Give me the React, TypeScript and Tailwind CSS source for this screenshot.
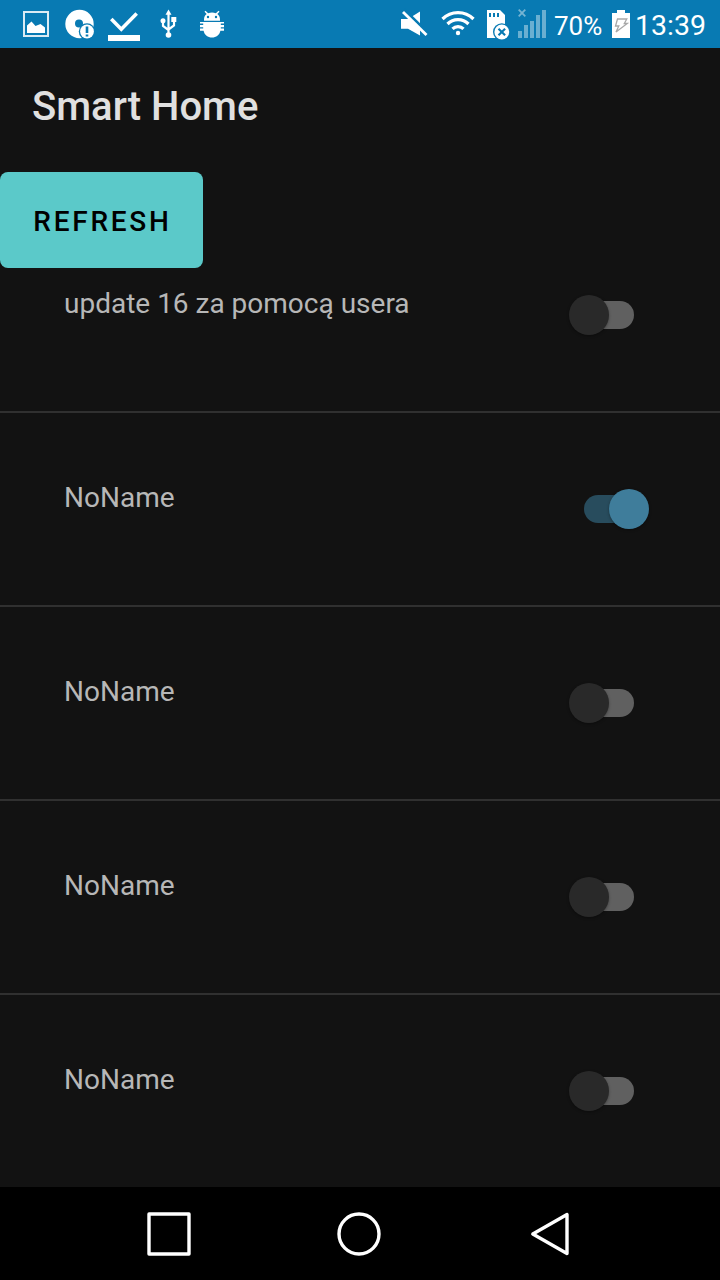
import type { ReactNode } from "react";

type Device = { name: string; on: boolean };

const devices: Device[] = [
  { name: "update 16 za pomocą usera", on: false },
  { name: "NoName", on: true },
  { name: "NoName", on: false },
  { name: "NoName", on: false },
  { name: "NoName", on: false },
];

function Glyph({ w, h = 48, className = "", children }: { w: number; h?: number; className?: string; children: ReactNode }) {
  return (
    <svg width={w} height={h} viewBox={`0 0 ${w} ${h}`} className={`shrink-0 ${className}`} fill="white" aria-hidden="true">
      {children}
    </svg>
  );
}

function StatusBar() {
  return (
    <header className="flex h-12 shrink-0 items-center bg-[#087ab3] text-white">
      <Glyph w={26} className="ml-[23px]">
        <rect x="1" y="12" width="24" height="24" fill="none" stroke="white" strokeWidth="2" strokeOpacity=".85" />
        <path d="M4 33V25.500L8.500 21.500l4 4.500 5-2 4.500 3.500V33z" />
      </Glyph>
      <Glyph w={30} className="ml-[16px]">
        <circle cx="14.500" cy="24" r="14.200" />
        <circle cx="14" cy="23.500" r="4" fill="#087ab3" />
        <circle cx="22" cy="31.500" r="8.200" fill="#087ab3" />
        <circle cx="22" cy="31.500" r="6.900" />
        <path d="M20.700 26.500h2.600V33h-2.600zM20.700 34.400h2.600v2.200h-2.600z" fill="#087ab3" />
      </Glyph>
      <Glyph w={32} className="ml-[13px]">
        <path d="M3.300 19l10 10.200L28.700 13.500" fill="none" stroke="white" strokeWidth="3.600" />
        <rect y="35" width="32" height="6" />
      </Glyph>
      <Glyph w={18} className="ml-[20px]">
        <path d="M8.500 9.500l3 5.200h-6z" />
        <path d="M8.500 13v22M3 21v5l5.500 4M14 20v5.500l-5.500 4" fill="none" stroke="white" strokeWidth="2.200" />
        <circle cx="3" cy="20.800" r="2.500" />
        <rect x="11.300" y="17" width="5" height="5" />
        <circle cx="8.500" cy="35" r="2.800" />
      </Glyph>
      <Glyph w={24} className="ml-[22px]">
        <path d="M4 20.700v-1c0-2.800 1-4.700 2.700-5.700L4.500 11.800l1-1 2.600 2.400a12 12 0 0 1 7.800 0l2.600-2.400 1 1L17.300 14c1.700 1 2.700 2.900 2.700 5.700v1z" />
        <path d="M0 22h24v1.600h-3.200V25H24v2.200h-3.200v1.300H24v2.200h-3.600C19.500 35 16.200 37.500 12 37.500S4.500 35 3.600 30.700H0v-2.200h3.200v-1.300H0V25h3.200v-1.400H0z" />
        <circle cx="8" cy="17" r="1.200" fill="#087ab3" />
        <circle cx="16" cy="17" r="1.200" fill="#087ab3" />
      </Glyph>
      <Glyph w={28} className="ml-[176px]">
        <path d="M1 19h7L20 11.500v24L8 28.800H1z" />
        <path d="M4 9.500L29 34" stroke="#087ab3" strokeWidth="3" />
        <path d="M3 12l23.500 23" stroke="white" strokeWidth="2.800" />
      </Glyph>
      <Glyph w={34} className="ml-[13px]">
        <g fill="none" stroke="white" strokeWidth="3.200">
          <path d="M1.500 19a21.800 21.800 0 0 1 31 0" />
          <path d="M6.500 24a14.800 14.800 0 0 1 21 0" />
          <path d="M11.500 28.800a7.800 7.800 0 0 1 11 0" />
        </g>
        <circle cx="17" cy="33" r="2.200" />
      </Glyph>
      <Glyph w={24} className="ml-[11px]">
        <path d="M1 10h13l5 5v23H1z" />
        <path d="M3 13h2v4H3zM7 13h2v4H7zM11 13h2v4h-2z" fill="#087ab3" />
        <circle cx="15.800" cy="32" r="8.800" fill="#087ab3" />
        <circle cx="15.800" cy="32" r="7.400" />
        <path d="M12.500 28.700l6.600 6.600m0-6.600l-6.600 6.600" stroke="#087ab3" strokeWidth="2.100" />
      </Glyph>
      <Glyph w={30} className="ml-[7px]">
        <g opacity=".4">
          <path d="M1 31h4v7H1zM7 25h4v13H7zM13 21h4v17h-4zM19 15h4v23h-4zM25 10h4v28h-4z" />
        </g>
        <path d="M1.700 9.700l6.600 6.600m0-6.600l-6.600 6.600" stroke="#75b4d3" strokeWidth="1.800" />
      </Glyph>
      <span className="ml-[7px] w-[50px] whitespace-nowrap pt-[3px] text-[26px] leading-[48px]">70%</span>
      <Glyph w={18} className="ml-[8px]">
        <path d="M5 10h8v3h5v25H0V13h5z" />
        <path d="M5.500 19h9.300L12.300 23.500h3L4 32l2.800-6H3.500z" fill="none" stroke="#a8a8a8" strokeWidth="1.300" />
      </Glyph>
      <time className="ml-[5px] whitespace-nowrap pt-[4px] text-[28.500px] leading-[48px]">13:39</time>
    </header>
  );
}

function Switch({ on }: { on: boolean }) {
  return (
    <button role="switch" aria-checked={on} aria-label="Power" className="mr-[71px] mb-[76px] grid h-10 w-20 items-center">
      <span className={`col-start-1 row-start-1 ml-[15px] h-7 w-[50px] rounded-full ${on ? "bg-[#284c5d]" : "bg-[#606060]"}`} />
      <span
        className={`col-start-1 row-start-1 size-10 rounded-full shadow-[0_1px_3px_rgba(0,0,0,0.35)] ${on ? "ml-10 bg-[#3f7d9b]" : "bg-[#292929]"}`}
      />
    </button>
  );
}

function DeviceRow({ device, first, last }: { device: Device; first: boolean; last: boolean }) {
  return (
    <li
      className={`flex shrink-0 items-end justify-between border-[#303030] ${first ? "h-[145px]" : "h-[194px]"} ${last ? "pb-[2px]" : "border-b-2"}`}
    >
      <span className="mb-[91px] ml-16 text-[28px] leading-[33px] text-[#b7b7b7]">{device.name}</span>
      <Switch on={device.on} />
    </li>
  );
}

function NavigationBar() {
  return (
    <nav className="flex h-[93px] shrink-0 items-center bg-black">
      <Glyph w={44} h={44} className="ml-[147px]">
        <rect x="2" y="2" width="40" height="40" fill="none" stroke="white" strokeWidth="3.400" strokeLinejoin="round" />
      </Glyph>
      <Glyph w={44} h={44} className="ml-[146px]">
        <circle cx="22" cy="22" r="20" fill="none" stroke="white" strokeWidth="3.400" />
      </Glyph>
      <Glyph w={40} h={44} className="ml-[149px]">
        <path d="M37 2.500v39L2.800 22z" fill="none" stroke="white" strokeWidth="3.400" strokeLinejoin="round" />
      </Glyph>
    </nav>
  );
}

export default function App() {
  return (
    <div className="flex h-[1280px] w-[720px] flex-col overflow-hidden bg-[#121212] font-['Roboto',sans-serif]">
      <StatusBar />
      <h1 className="h-[124px] shrink-0 pt-[35px] pl-8 text-[40px] leading-[48px] font-medium text-[#e0e0e0]">Smart Home</h1>
      <button className="h-24 w-[203px] shrink-0 rounded-lg bg-[#5bc9c9] pt-[4px] pl-[2px] text-[28px] font-medium tracking-[2.75px] text-black">
        REFRESH
      </button>
      <ul className="flex grow flex-col overflow-hidden">
        {devices.map((device, i) => (
          <DeviceRow key={i} device={device} first={i === 0} last={i === devices.length - 1} />
        ))}
      </ul>
      <NavigationBar />
    </div>
  );
}
